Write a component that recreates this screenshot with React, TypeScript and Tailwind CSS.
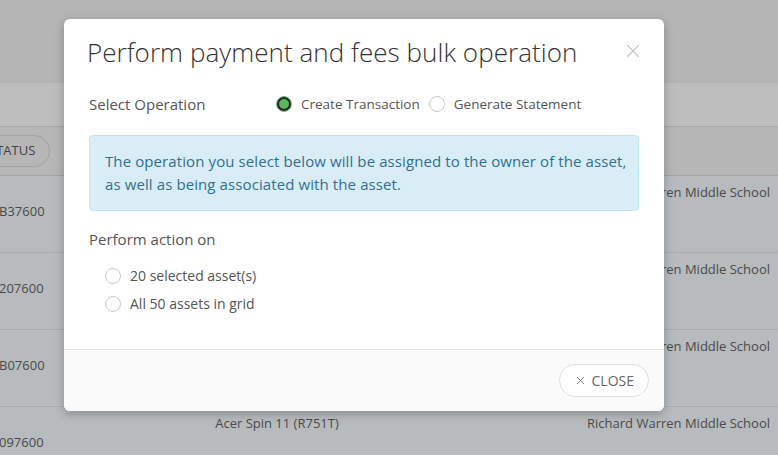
import { X } from "lucide-react";

const rows = [
  { id: "B37600", model: "", school: "Richard Warren Middle School" },
  { id: "207600", model: "", school: "Richard Warren Middle School" },
  { id: "B07600", model: "", school: "Richard Warren Middle School" },
  { id: "097600", model: "Acer Spin 11 (R751T)", school: "Richard Warren Middle School" },
];

const Radio = ({ checked }: { checked?: boolean }) =>
  checked ? (
    <span className="flex h-4 w-4 shrink-0 items-center justify-center rounded-full border border-[#5cb85c]">
      <span className="h-[14px] w-[14px] rounded-full border-2 border-[#222] bg-[#5cb85c]" />
    </span>
  ) : (
    <span className="h-4 w-4 shrink-0 rounded-full border border-[#c8c8c8] bg-white" />
  );

const App = () => {
  return (
    <div className="relative h-[455px] w-[778px] overflow-hidden bg-[#b5b5b5] font-['Open_Sans',sans-serif] text-[#444]">
      {/* page behind the overlay */}
      <div className="h-[83px] bg-[#b4b4b4]" />
      <div className="h-[44px] border-b border-[#a9a9a9] bg-[#bdbdbd]" />
      <div className="flex h-[49px] items-center border-b border-[#a5a5a5] bg-[#b6b6b6]">
        <span className="ml-[-28px] rounded-full border border-[#a3a3a3] py-[5px] pl-4 pr-[14px] text-[13px] text-[#444]">
          STATUS
        </span>
      </div>
      {rows.map((r) => (
        <div key={r.id} className="relative h-[77px] border-b border-[#a9adb0] bg-[#b7bbbe] text-[13px] text-[#4a4a4a]">
          <div className="flex items-start justify-between pt-[7px] pr-2">
            <span className="ml-[210px] w-[134px] text-center">{r.model}</span>
            <span>{r.school}</span>
          </div>
          <span className="absolute left-[-1px] top-[26px]">{r.id}</span>
        </div>
      ))}

      {/* modal */}
      <div className="absolute left-[64px] top-[19px] flex h-[392px] w-[600px] flex-col overflow-hidden rounded-md bg-white shadow-[0_3px_10px_rgba(0,0,0,0.25)]">
        <div className="flex items-start justify-between pl-[23px] pr-[20px] pt-[16px]">
          <h1 className="text-[26px] font-light leading-[34px] tracking-[0.05px] text-[#333]">
            Perform payment and fees bulk operation
          </h1>
          <X className="mt-[5px] h-[22px] w-[22px] text-[#c4c4c4]" strokeWidth={1.3} />
        </div>

        <div className="flex-1 px-[25px]">
          <div className="mt-[25px] flex items-center text-[15px] leading-[20px] text-[#555]">
            <span className="w-[187px]">Select Operation</span>
            <label className="flex items-center gap-[9px] text-[13.5px]">
              <Radio checked />
              <span>Create Transaction</span>
            </label>
            <label className="ml-[9px] flex items-center gap-[9px] text-[13.5px]">
              <Radio />
              <span>Generate Statement</span>
            </label>
          </div>

          <div className="mt-[21px] rounded border border-[#bce8f1] bg-[#d9edf7] py-[14px] pl-[15px] pr-[8px] text-[15px] leading-[23px] tracking-[0.1px] text-[#31708f]">
            The operation you select below will be assigned to the owner of the asset, as well as being associated with the asset.
          </div>

          <div className="mt-[17px] text-[15px] leading-[22px] text-[#555]">Perform action on</div>

          <div className="ml-[16px] mt-[16px] flex flex-col gap-[8px] text-[14px] leading-[20px] text-[#555]">
            <label className="flex items-center gap-[9px]">
              <Radio />
              <span>20 selected asset(s)</span>
            </label>
            <label className="flex items-center gap-[9px]">
              <Radio />
              <span>All 50 assets in grid</span>
            </label>
          </div>
        </div>

        <div className="flex h-[62px] items-center justify-end border-t border-[#e5e5e5] bg-[#fafafa] pr-[15px]">
          <button className="flex h-[33px] items-center gap-[5px] rounded-full border border-[#e0e0e0] bg-white px-[14px] text-[14px] text-[#666]">
            <X className="h-[13px] w-[13px]" strokeWidth={1.5} />
            CLOSE
          </button>
        </div>
      </div>
    </div>
  );
};

export default App;
